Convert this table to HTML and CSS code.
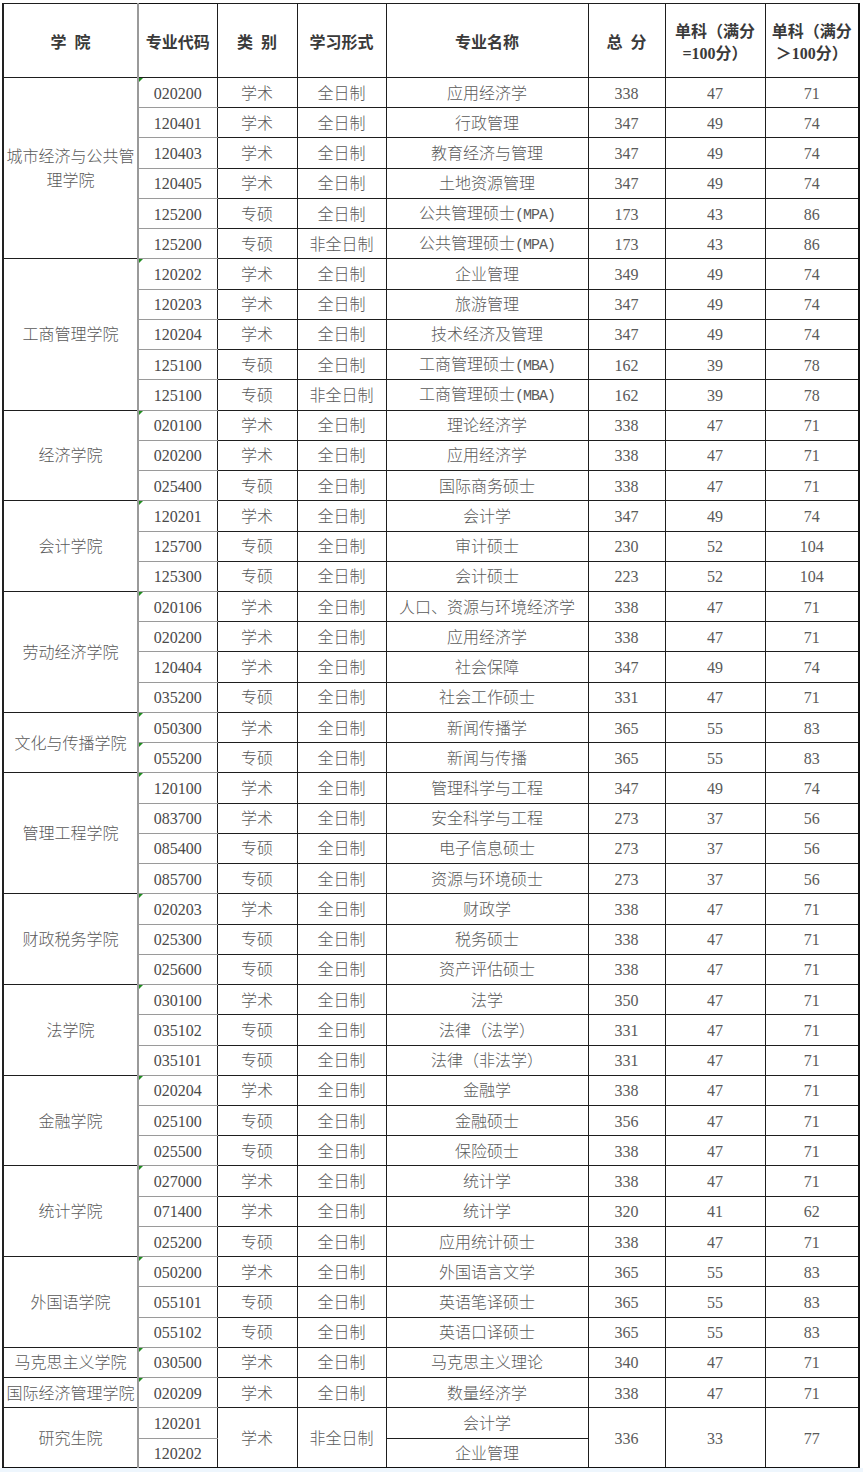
FILE: index.html
```html
<!DOCTYPE html>
<html lang="zh-CN">
<head>
<meta charset="utf-8">
<title>复试分数线</title>
<link rel="stylesheet" href="styles.css">
</head>
<body>
<div class="page">
<table class="grid">
<colgroup>
<col class="c1"><col class="c2"><col class="c3"><col class="c4"><col class="c5"><col class="c6"><col class="c7"><col class="c8">
</colgroup>
<thead>
<tr class="head">
<th>学&nbsp;&nbsp;院</th><th class="code">专业代码</th><th>类&nbsp;&nbsp;别</th><th>学习形式</th><th>专业名称</th><th>总&nbsp;&nbsp;分</th><th>单科（满分<br>=100分）</th><th>单科（满分<br>＞100分）</th>
</tr>
</thead>
<tbody>
<tr><td class="school" rowspan="6">城市经济与公共管理学院</td><td class="code mk">020200</td><td>学术</td><td>全日制</td><td>应用经济学</td><td>338</td><td>47</td><td>71</td></tr>
<tr><td class="code">120401</td><td>学术</td><td>全日制</td><td>行政管理</td><td>347</td><td>49</td><td>74</td></tr>
<tr><td class="code">120403</td><td>学术</td><td>全日制</td><td>教育经济与管理</td><td>347</td><td>49</td><td>74</td></tr>
<tr><td class="code">120405</td><td>学术</td><td>全日制</td><td>土地资源管理</td><td>347</td><td>49</td><td>74</td></tr>
<tr><td class="code">125200</td><td>专硕</td><td>全日制</td><td>公共管理硕士<span class="lat">(MPA)</span></td><td>173</td><td>43</td><td>86</td></tr>
<tr><td class="code">125200</td><td>专硕</td><td>非全日制</td><td>公共管理硕士<span class="lat">(MPA)</span></td><td>173</td><td>43</td><td>86</td></tr>

<tr><td class="school" rowspan="5">工商管理学院</td><td class="code mk">120202</td><td>学术</td><td>全日制</td><td>企业管理</td><td>349</td><td>49</td><td>74</td></tr>
<tr><td class="code">120203</td><td>学术</td><td>全日制</td><td>旅游管理</td><td>347</td><td>49</td><td>74</td></tr>
<tr><td class="code">120204</td><td>学术</td><td>全日制</td><td>技术经济及管理</td><td>347</td><td>49</td><td>74</td></tr>
<tr><td class="code">125100</td><td>专硕</td><td>全日制</td><td>工商管理硕士<span class="lat">(MBA)</span></td><td>162</td><td>39</td><td>78</td></tr>
<tr><td class="code">125100</td><td>专硕</td><td>非全日制</td><td>工商管理硕士<span class="lat">(MBA)</span></td><td>162</td><td>39</td><td>78</td></tr>

<tr><td class="school" rowspan="3">经济学院</td><td class="code mk">020100</td><td>学术</td><td>全日制</td><td>理论经济学</td><td>338</td><td>47</td><td>71</td></tr>
<tr><td class="code">020200</td><td>学术</td><td>全日制</td><td>应用经济学</td><td>338</td><td>47</td><td>71</td></tr>
<tr><td class="code">025400</td><td>专硕</td><td>全日制</td><td>国际商务硕士</td><td>338</td><td>47</td><td>71</td></tr>

<tr><td class="school" rowspan="3">会计学院</td><td class="code mk">120201</td><td>学术</td><td>全日制</td><td>会计学</td><td>347</td><td>49</td><td>74</td></tr>
<tr><td class="code">125700</td><td>专硕</td><td>全日制</td><td>审计硕士</td><td>230</td><td>52</td><td>104</td></tr>
<tr><td class="code">125300</td><td>专硕</td><td>全日制</td><td>会计硕士</td><td>223</td><td>52</td><td>104</td></tr>

<tr><td class="school" rowspan="4">劳动经济学院</td><td class="code mk">020106</td><td>学术</td><td>全日制</td><td>人口、资源与环境经济学</td><td>338</td><td>47</td><td>71</td></tr>
<tr><td class="code">020200</td><td>学术</td><td>全日制</td><td>应用经济学</td><td>338</td><td>47</td><td>71</td></tr>
<tr><td class="code">120404</td><td>学术</td><td>全日制</td><td>社会保障</td><td>347</td><td>49</td><td>74</td></tr>
<tr><td class="code">035200</td><td>专硕</td><td>全日制</td><td>社会工作硕士</td><td>331</td><td>47</td><td>71</td></tr>

<tr><td class="school" rowspan="2">文化与传播学院</td><td class="code mk">050300</td><td>学术</td><td>全日制</td><td>新闻传播学</td><td>365</td><td>55</td><td>83</td></tr>
<tr><td class="code mk">055200</td><td>专硕</td><td>全日制</td><td>新闻与传播</td><td>365</td><td>55</td><td>83</td></tr>

<tr><td class="school" rowspan="4">管理工程学院</td><td class="code mk">120100</td><td>学术</td><td>全日制</td><td>管理科学与工程</td><td>347</td><td>49</td><td>74</td></tr>
<tr><td class="code">083700</td><td>学术</td><td>全日制</td><td>安全科学与工程</td><td>273</td><td>37</td><td>56</td></tr>
<tr><td class="code">085400</td><td>专硕</td><td>全日制</td><td>电子信息硕士</td><td>273</td><td>37</td><td>56</td></tr>
<tr><td class="code">085700</td><td>专硕</td><td>全日制</td><td>资源与环境硕士</td><td>273</td><td>37</td><td>56</td></tr>

<tr><td class="school" rowspan="3">财政税务学院</td><td class="code mk">020203</td><td>学术</td><td>全日制</td><td>财政学</td><td>338</td><td>47</td><td>71</td></tr>
<tr><td class="code">025300</td><td>专硕</td><td>全日制</td><td>税务硕士</td><td>338</td><td>47</td><td>71</td></tr>
<tr><td class="code">025600</td><td>专硕</td><td>全日制</td><td>资产评估硕士</td><td>338</td><td>47</td><td>71</td></tr>

<tr><td class="school" rowspan="3">法学院</td><td class="code mk">030100</td><td>学术</td><td>全日制</td><td>法学</td><td>350</td><td>47</td><td>71</td></tr>
<tr><td class="code">035102</td><td>专硕</td><td>全日制</td><td>法律（法学）</td><td>331</td><td>47</td><td>71</td></tr>
<tr><td class="code">035101</td><td>专硕</td><td>全日制</td><td>法律（非法学）</td><td>331</td><td>47</td><td>71</td></tr>

<tr><td class="school" rowspan="3">金融学院</td><td class="code mk">020204</td><td>学术</td><td>全日制</td><td>金融学</td><td>338</td><td>47</td><td>71</td></tr>
<tr><td class="code">025100</td><td>专硕</td><td>全日制</td><td>金融硕士</td><td>356</td><td>47</td><td>71</td></tr>
<tr><td class="code">025500</td><td>专硕</td><td>全日制</td><td>保险硕士</td><td>338</td><td>47</td><td>71</td></tr>

<tr><td class="school" rowspan="3">统计学院</td><td class="code mk">027000</td><td>学术</td><td>全日制</td><td>统计学</td><td>338</td><td>47</td><td>71</td></tr>
<tr><td class="code">071400</td><td>学术</td><td>全日制</td><td>统计学</td><td>320</td><td>41</td><td>62</td></tr>
<tr><td class="code">025200</td><td>专硕</td><td>全日制</td><td>应用统计硕士</td><td>338</td><td>47</td><td>71</td></tr>

<tr><td class="school" rowspan="3">外国语学院</td><td class="code mk">050200</td><td>学术</td><td>全日制</td><td>外国语言文学</td><td>365</td><td>55</td><td>83</td></tr>
<tr><td class="code">055101</td><td>专硕</td><td>全日制</td><td>英语笔译硕士</td><td>365</td><td>55</td><td>83</td></tr>
<tr><td class="code">055102</td><td>专硕</td><td>全日制</td><td>英语口译硕士</td><td>365</td><td>55</td><td>83</td></tr>

<tr><td class="school">马克思主义学院</td><td class="code mk">030500</td><td>学术</td><td>全日制</td><td>马克思主义理论</td><td>340</td><td>47</td><td>71</td></tr>
<tr><td class="school">国际经济管理学院</td><td class="code mk">020209</td><td>学术</td><td>全日制</td><td>数量经济学</td><td>338</td><td>47</td><td>71</td></tr>

<tr><td class="school" rowspan="2">研究生院</td><td class="code">120201</td><td rowspan="2">学术</td><td rowspan="2">非全日制</td><td>会计学</td><td rowspan="2">336</td><td rowspan="2">33</td><td rowspan="2">77</td></tr>
<tr><td class="code">120202</td><td>企业管理</td></tr>
</tbody>
</table>
</div>
</body>
</html>
```

FILE: styles.css
```css
html {
  background: #eef6fd;
}
body {
  margin: 0;
}
.page {
  background: #fff;
  height: 1468px;
  box-sizing: border-box;
  padding: 3px 0 0 2px;
}
.grid {
  border-collapse: collapse;
  table-layout: fixed;
  width: 857px;
  border-top: 1px solid #111;
  border-left: 2px solid #222;
  border-right: 2px solid #111;
  border-bottom: 2px solid #111;
  font-family: "Liberation Serif", "Noto Sans CJK SC", serif;
  font-size: 16px;
  color: #5a5a5a;
}
.c1 { width: 135px; }
.c2 { width: 79px; }
.c3 { width: 80px; }
.c4 { width: 89px; }
.c5 { width: 202px; }
.c6 { width: 77px; }
.c7 { width: 100px; }
.c8 { width: 94px; }

.grid th,
.grid td {
  border: 1px solid #1e1e1e;
  padding: 2px 1px 0;
  text-align: center;
  vertical-align: middle;
  line-height: 22px;
  white-space: nowrap;
}
.grid td {
  font-weight: 300;
}
.head {
  height: 74px;
}
.grid th {
  font-weight: 700;
  color: #3a3a3a;
  white-space: normal;
  padding-top: 4px;
}
.grid tbody tr {
  height: 30.24px;
}
.grid .school {
  white-space: normal;
  line-height: 24px;
  padding: 2px 0 0;
}
.lat {
  font-family: "Liberation Mono", monospace;
  font-size: 15px;
  letter-spacing: -1px;
}
.grid .code {
  border-left: 2px solid #9a9a9a;
  border-top: 1px solid #9a9a9a;
  border-bottom: 1px solid #9a9a9a;
  border-right: 1px solid #1e1e1e;
  color: #4a4a4a;
}
.grid th.code {
  border-top: 1px solid #111;
  border-bottom: 1px solid #1e1e1e;
  color: #3a3a3a;
}
.mk {
  position: relative;
}
.mk::before {
  content: "";
  position: absolute;
  left: 0;
  top: 0;
  border-top: 4px solid #1f8c1f;
  border-right: 4px solid transparent;
}
```
